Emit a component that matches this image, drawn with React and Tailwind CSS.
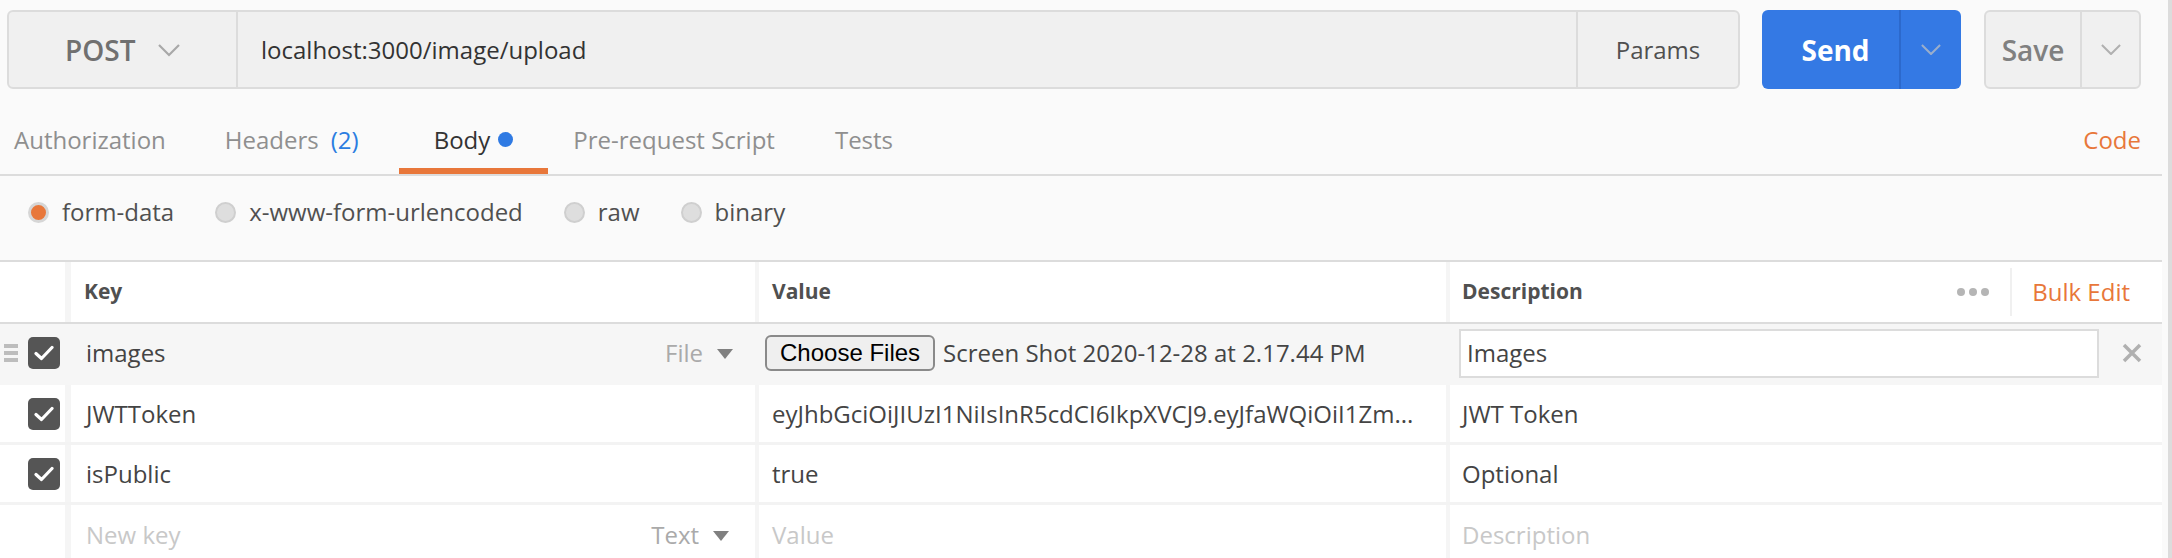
import React from "react";

const Chevron = ({ color = "#9a9a9a", w = 22 }) => (
  <svg width={w} height={w * 0.55} viewBox="0 0 22 12" fill="none">
    <polyline points="1,1 11,11 21,1" stroke={color} strokeWidth="2.2" />
  </svg>
);

const Caret = () => (
  <svg width="16" height="10" viewBox="0 0 16 10">
    <polygon points="0,0 16,0 8,10" fill="#808080" />
  </svg>
);

const Check = () => (
  <div className="w-[32px] h-[32px] rounded-[5px] bg-[#555555] flex items-center justify-center shrink-0">
    <svg width="20" height="16" viewBox="0 0 20 16" fill="none">
      <polyline points="2,8.5 7.5,13.5 18,2.5" stroke="#ffffff" strokeWidth="3.2" strokeLinecap="round" strokeLinejoin="round" />
    </svg>
  </div>
);

const Radio = ({ on, label }) => (
  <div className="flex items-center shrink-0">
    <div
      className={
        on
          ? "shrink-0 w-[21px] h-[21px] rounded-full border-[3px] border-[#d6d6d6] bg-[#e8773a]"
          : "shrink-0 w-[21px] h-[21px] rounded-full border-2 border-[#cfcfcf] bg-[#dedede]"
      }
    />
    <span className="ml-[13px] text-[24px] text-[#505050]">{label}</span>
  </div>
);

const rows = [
  { key: "JWTToken", value: "eyJhbGciOiJIUzI1NiIsInR5cdCI6IkpXVCJ9.eyJfaWQiOiI1Zm...", desc: "JWT Token" },
  { key: "isPublic", value: "true", desc: "Optional" },
];

export default function App() {
  return (
    <div className="w-[2172px] h-[558px] overflow-hidden bg-[#fafafa] flex font-['Open_Sans',sans-serif]">
      <div className="w-[2162px] flex flex-col">
        {/* URL BAR */}
        <div className="shrink-0 flex h-[89px] pt-[10px] pl-[7px]">
          <div className="w-[1733px] h-[79px] flex rounded-[6px] border-2 border-[#dcdcdc] bg-[#f0f0f0]">
            <div className="w-[229px] flex items-center pl-[56px] border-r-2 border-[#dcdcdc]">
              <span className="text-[28px] font-semibold text-[#707070]">POST</span>
              <span className="ml-[23px] mt-[2px]">
                <Chevron color="#a8a8a8" />
              </span>
            </div>
            <div className="flex-1 flex items-center pl-[23px] text-[24px] text-[#333333]">
              localhost:3000/image/upload
            </div>
            <div className="w-[162px] flex items-center justify-center border-l-2 border-[#dcdcdc] text-[24px] text-[#505050]">
              Params
            </div>
          </div>

          <div className="ml-[22px] w-[199px] h-[79px] flex rounded-[6px] bg-[#3479e4]">
            <div className="w-[139px] flex items-center justify-center pl-[10px] border-r-2 border-[#2c69cc] text-[28px] font-bold text-white">
              Send
            </div>
            <div className="flex-1 flex items-center justify-center">
              <Chevron color="#9aaecb" w={20} />
            </div>
          </div>

          <div className="ml-[23px] w-[157px] h-[79px] flex rounded-[6px] border-2 border-[#dcdcdc] bg-[#f0f0f0]">
            <div className="w-[96px] flex items-center justify-center border-r-2 border-[#dcdcdc] text-[28px] font-semibold text-[#808080]">
              Save
            </div>
            <div className="flex-1 flex items-center justify-center">
              <Chevron color="#b0b0b0" w={20} />
            </div>
          </div>
        </div>

        {/* TABS */}
        <div className="shrink-0 flex h-[87px] border-b-2 border-[#dcdcdc] text-[24px] text-[#8f8f8f]">
          <div className="flex items-center pt-[16px] ml-[14px]">Authorization</div>
          <div className="flex items-center pt-[16px] ml-[59px]">
            Headers<span className="ml-[12px] text-[#2a7de1]">(2)</span>
          </div>
          <div className="flex items-center pt-[16px] ml-[40px] px-[35px] shadow-[inset_0_-6px_0_#e8773a] text-[#333333]">
            Body
            <span className="ml-[8px] w-[15px] h-[15px] rounded-full bg-[#2f7ae3]" />
          </div>
          <div className="flex items-center pt-[16px] ml-[25px]">Pre-request Script</div>
          <div className="flex items-center pt-[16px] ml-[60px]">Tests</div>
          <div className="flex items-center pt-[16px] ml-auto pr-[21px] text-[#e8773a]">Code</div>
        </div>

        {/* BODY TYPE */}
        <div className="shrink-0 flex items-center h-[84px] pb-[12px] pl-[28px] gap-[41px]">
          <Radio on label="form-data" />
          <Radio label="x-www-form-urlencoded" />
          <Radio label="raw" />
          <Radio label="binary" />
        </div>

        {/* TABLE */}
        <div className="shrink-0 bg-white border-t-2 border-[#dcdcdc]">
          <div className="flex h-[62px] border-b-2 border-[#dcdcdc] text-[21px] font-bold text-[#505050]">
            <div className="w-[71px] border-r-[6px] border-[#f5f5f5]" />
            <div className="w-[688px] flex items-center pl-[13px] border-r-[4px] border-[#f5f5f5]">Key</div>
            <div className="w-[691px] flex items-center pl-[13px] border-r-[4px] border-[#f5f5f5]">Value</div>
            <div className="flex-1 flex items-center pl-[12px]">
              Description
              <div className="ml-auto flex items-center h-[48px]">
                <div className="flex gap-[4px] pr-[21px]">
                  <span className="w-[8px] h-[8px] rounded-full bg-[#b5b5b5]" />
                  <span className="w-[8px] h-[8px] rounded-full bg-[#b5b5b5]" />
                  <span className="w-[8px] h-[8px] rounded-full bg-[#b5b5b5]" />
                </div>
                <div className="h-full border-l-2 border-[#f0f0f0]" />
                <span className="pl-[20px] pr-[32px] text-[24px] font-normal text-[#e8773a]">Bulk Edit</span>
              </div>
            </div>
          </div>

          {/* row 1 hovered */}
          <div className="flex h-[61px] bg-[#f6f6f6] border-b-[3px] border-[#f6f6f6] text-[24px] text-[#444444]">
            <div className="w-[71px] flex items-center pl-[4px]">
              <div className="flex flex-col gap-[3px] w-[14px]">
                <span className="h-[4px] bg-[#bdbdbd]" />
                <span className="h-[4px] bg-[#bdbdbd]" />
                <span className="h-[4px] bg-[#bdbdbd]" />
              </div>
              <div className="ml-[10px]">
                <Check />
              </div>
            </div>
            <div className="w-[688px] flex items-center pl-[15px] pr-[26px]">
              images
              <span className="ml-auto text-[#aaaaaa]">File</span>
              <span className="ml-[14px] mt-[2px]">
                <Caret />
              </span>
            </div>
            <div className="w-[691px] flex items-center pl-[6px]">
              <div className="h-[36px] px-[13px] flex items-center rounded-[6px] border-2 border-[#8a8a8a] bg-[#efefef] text-[24px] text-black font-['Liberation_Sans',Arial,sans-serif]">
                Choose Files
              </div>
              <span className="ml-[8px]">Screen Shot 2020-12-28 at 2.17.44 PM</span>
            </div>
            <div className="flex-1 flex items-center pl-[9px]">
              <div className="w-[640px] h-[49px] flex items-center pl-[6px] bg-white border-2 border-[#dcdcdc]">
                Images
              </div>
              <svg className="ml-[23px]" width="20" height="20" viewBox="0 0 20 20">
                <path d="M2 2 L18 18 M18 2 L2 18" stroke="#b0b0b0" strokeWidth="3.5" />
              </svg>
            </div>
          </div>

          {rows.map((r) => (
            <div key={r.key} className="flex h-[60px] border-b-[3px] border-[#f3f3f3] text-[24px] text-[#444444]">
              <div className="w-[71px] flex items-center pl-[28px] border-r-[6px] border-[#f5f5f5]">
                <Check />
              </div>
              <div className="w-[688px] flex items-center pl-[15px] border-r-[4px] border-[#f5f5f5]">{r.key}</div>
              <div className="w-[691px] flex items-center pl-[13px] border-r-[4px] border-[#f5f5f5]">{r.value}</div>
              <div className="flex-1 flex items-center pl-[12px]">{r.desc}</div>
            </div>
          ))}

          <div className="flex h-[60px] text-[24px] text-[#c8c8c8]">
            <div className="w-[71px] border-r-[6px] border-[#f5f5f5]" />
            <div className="w-[688px] flex items-center pl-[15px] pr-[26px] border-r-[4px] border-[#f5f5f5]">
              New key
              <span className="ml-auto text-[#aaaaaa]">Text</span>
              <span className="ml-[14px] mt-[2px]">
                <Caret />
              </span>
            </div>
            <div className="w-[691px] flex items-center pl-[13px] border-r-[4px] border-[#f5f5f5]">Value</div>
            <div className="flex-1 flex items-center pl-[12px]">Description</div>
          </div>
        </div>
      </div>

      {/* scrollbar */}
      <div className="w-[10px] flex bg-[#fafafa]">
        <div className="ml-auto w-[4px] bg-[#dcdcdc]" />
      </div>
    </div>
  );
}
